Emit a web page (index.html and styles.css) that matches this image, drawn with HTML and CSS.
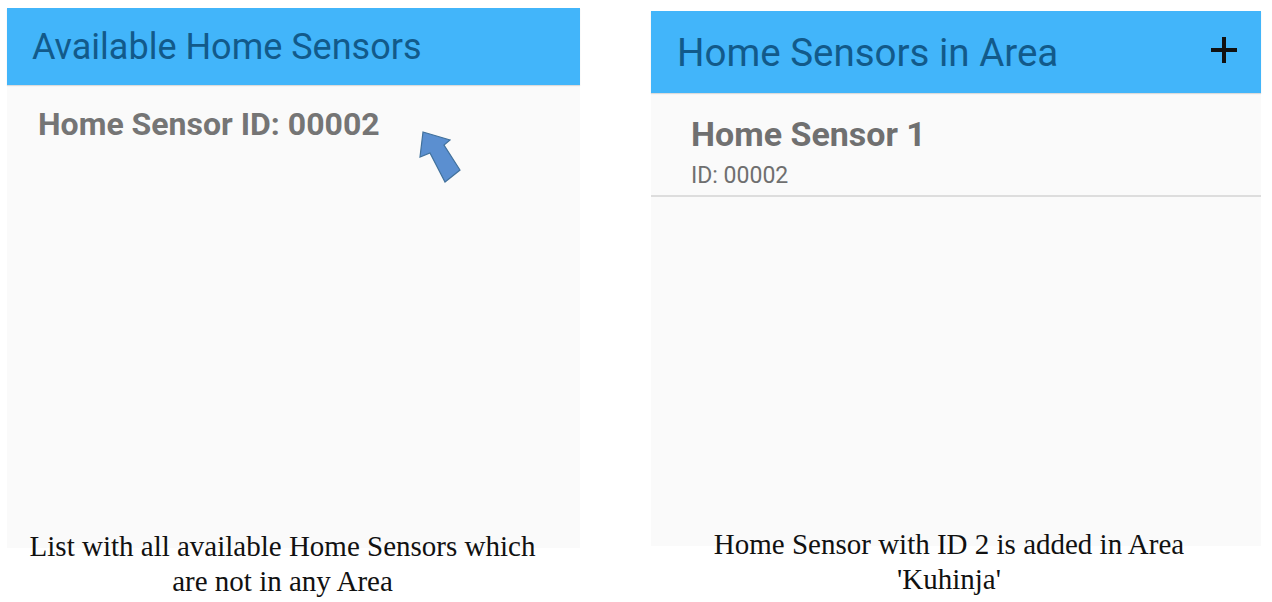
FILE: index.html
```html
<!DOCTYPE html>
<html lang="en">
<head>
    <meta charset="UTF-8">
    <meta name="viewport" content="width=device-width, initial-scale=1.0">
    <title>Home Sensors</title>
    <link rel="stylesheet" href="styles.css">
</head>
<body>
    <div class="shots">
        <div class="shot shot-left">
            <div class="screen">
                <div class="toolbar">
                    <h1 class="toolbar-title">Available Home Sensors</h1>
                </div>
                <div class="list">
                    <div class="item-single">Home Sensor ID: 00002</div>
                </div>
                <svg class="arrow" width="48" height="58" viewBox="0 0 48 58">
                    <path d="M5 3 L32 11 L26 16 L42 41 L27 53 L12 24 L2 28 Z" fill="#5b8fd0" stroke="#41719c" stroke-width="1.2" stroke-linejoin="miter"/>
                </svg>
            </div>
            <p class="caption">List with all available Home Sensors which<br>are not in any Area</p>
        </div>

        <div class="shot shot-right">
            <div class="screen">
                <div class="toolbar toolbar-tall">
                    <h1 class="toolbar-title">Home Sensors in Area</h1>
                    <svg class="plus" width="30" height="30" viewBox="0 0 30 30">
                        <path d="M15 2 V28 M2 15 H28" stroke="#111" stroke-width="4"/>
                    </svg>
                </div>
                <div class="list">
                    <div class="item">
                        <div class="item-title">Home Sensor 1</div>
                        <div class="item-sub">ID: 00002</div>
                    </div>
                </div>
            </div>
            <p class="caption">Home Sensor with ID 2 is added in Area<br>'Kuhinja'</p>
        </div>
    </div>
</body>
</html>
```

FILE: styles.css
```css
body {
    margin: 0;
    background: #ffffff;
    font-family: Roboto, "Liberation Sans", sans-serif;
}
.shots {
    display: flex;
    align-items: flex-start;
}
.shot-left {
    width: 573px;
    margin: 8px 0 0 7px;
}
.shot-right {
    width: 610px;
    margin: 11px 0 0 71px;
}
.screen {
    position: relative;
    background: #fafafa;
}
.shot-left .screen {
    height: 540px;
}
.shot-right .screen {
    height: 535px;
}
.toolbar {
    height: 77px;
    background: #42b5fa;
    display: flex;
    align-items: center;
    justify-content: space-between;
    padding: 0 22px 0 25px;
    box-shadow: 0 1px 1px rgba(0, 0, 0, 0.12);
}
.toolbar-tall {
    height: 82px;
    padding-left: 26px;
}
.toolbar-title {
    margin: 0;
    font-weight: 400;
    font-size: 36px;
    color: #125a8a;
}
.toolbar-tall .toolbar-title {
    font-size: 38.5px;
}
.plus {
    display: block;
    margin-top: -4px;
}
.item-single {
    padding: 19px 0 0 31px;
    font-size: 32px;
    line-height: 40px;
    font-weight: 700;
    color: #757575;
}
.item {
    padding: 20px 0 5px 40px;
    border-bottom: 2px solid #dddddd;
}
.item-title {
    font-size: 34px;
    font-weight: 700;
    color: #707070;
    line-height: 42px;
}
.item-sub {
    font-size: 23px;
    color: #6f6f6f;
    line-height: 28px;
    margin-top: 7px;
}
.arrow {
    position: absolute;
    left: 411px;
    top: 121px;
}
.caption {
    position: relative;
    margin: -19px 0 0;
    font-family: "Liberation Serif", "DejaVu Serif", serif;
    font-size: 29px;
    line-height: 35px;
    text-align: center;
    color: #111111;
}
.shot-left .caption {
    padding-right: 22px;
}
.shot-right .caption {
    padding-right: 14px;
}
```
